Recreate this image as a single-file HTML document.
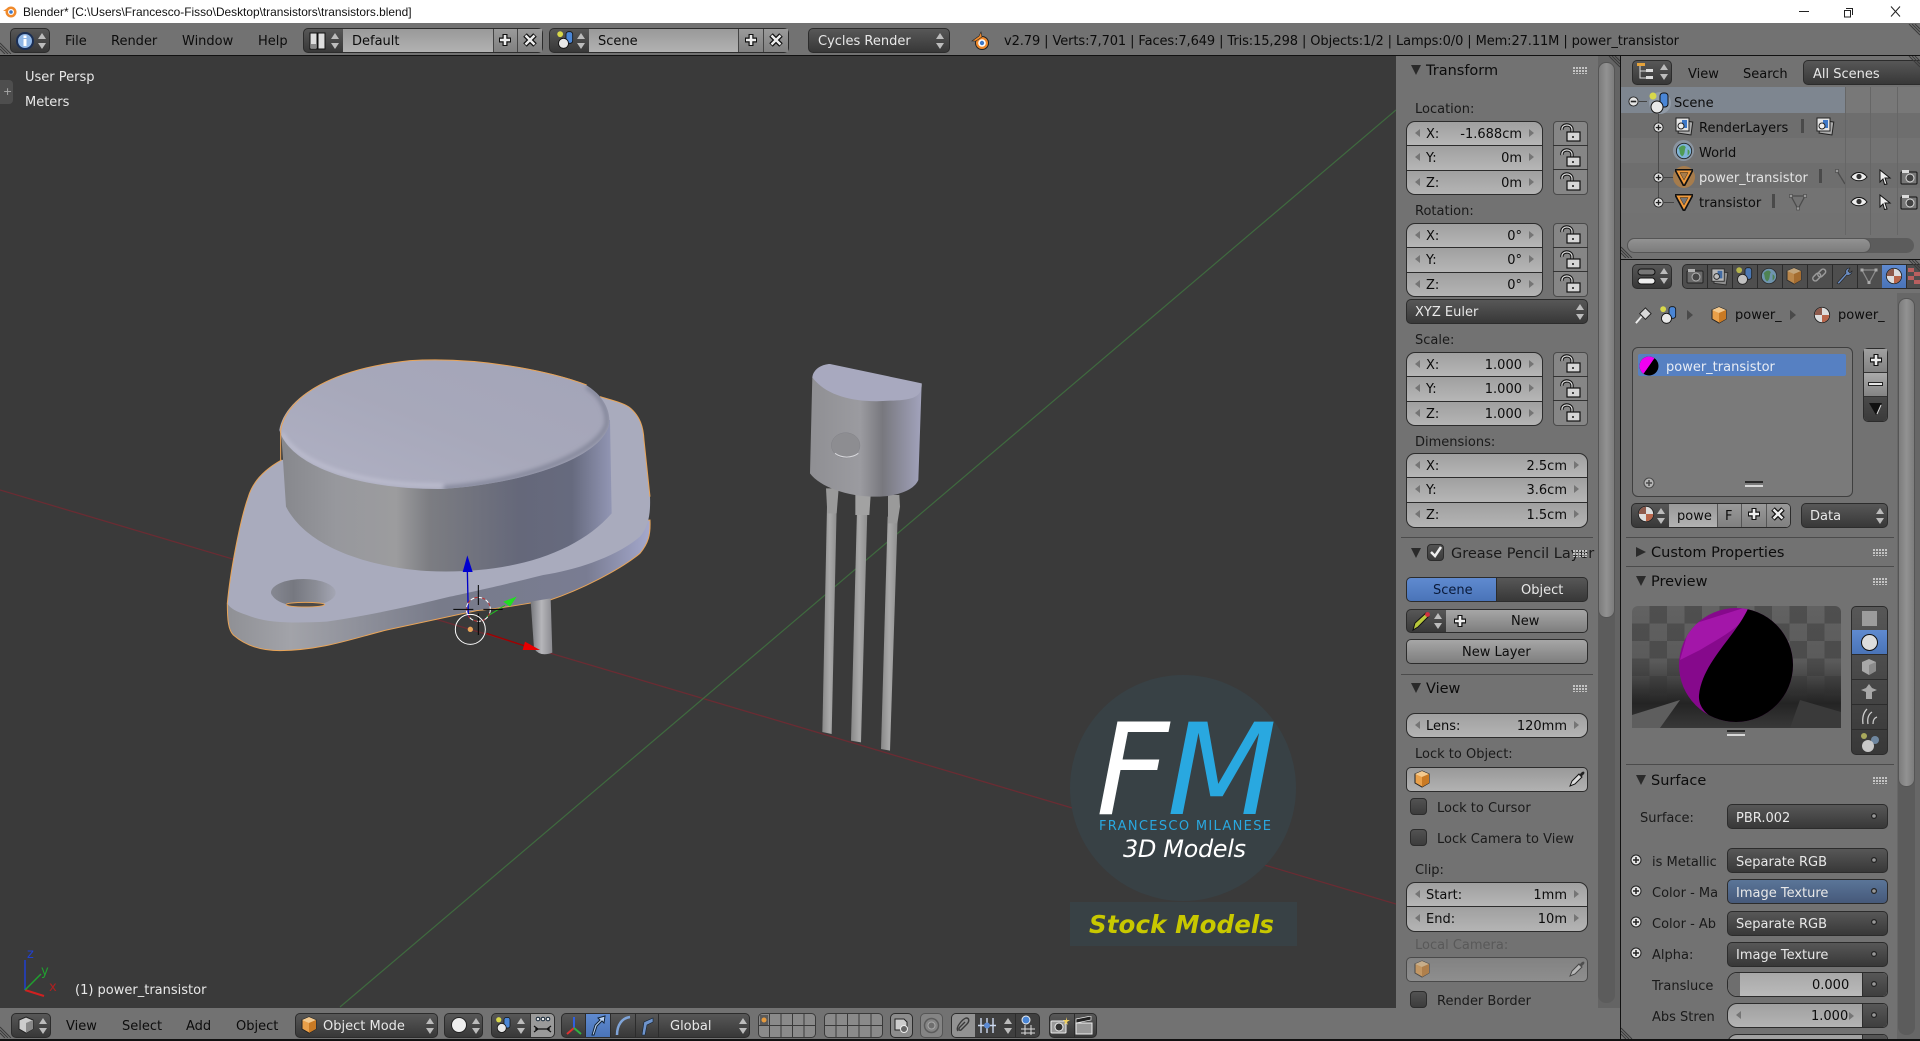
<!DOCTYPE html>
<html><head><meta charset="utf-8"><title>Blender</title>
<style>
html,body{margin:0;padding:0;width:1920px;height:1041px;overflow:hidden;background:#727272}
#r{position:absolute;left:0;top:0;width:1920px;height:1041px;overflow:hidden;font:13px/20px "DejaVu Sans","Liberation Sans",sans-serif;color:#0c0c0c}
#r div,#r span,#r svg{position:absolute;box-sizing:border-box}
.t{white-space:nowrap;line-height:20px;margin-top:1px}
.h{font-size:14.5px}
.w{color:#e8e8e8}
.bx{border:1px solid #2c2c2c;border-radius:5px}
.dk{background:linear-gradient(#575757,#383838);color:#e8e8e8}
.lt{background:linear-gradient(#a6a6a6,#7e7e7e)}
.fd{background:linear-gradient(#999,#b2b2b2)}
.g{border:1px solid #2c2c2c;border-radius:9px;overflow:hidden;background:#222}
.lk{border:1px solid #4a4a4a;border-radius:4px;background:#868686;overflow:hidden}
.n{background:linear-gradient(#a0a0a0,#b6b6b6);width:100%;left:0;border-bottom:1px solid #2c2c2c}
.al,.ar{width:0;height:0;border-top:4px solid transparent;border-bottom:4px solid transparent;top:7px}
.al{left:8px;border-right:5px solid #757575}.ar{right:8px;border-left:5px solid #757575}
.k{left:19px;top:3px;white-space:nowrap}.v{right:20px;top:3px;white-space:nowrap}
.sp{height:1px;background:#4b4b4b}
.tr{width:0;height:0;border-left:5px solid transparent;border-right:5px solid transparent;border-top:10px solid #2a2a2a}
.tc{width:0;height:0;border-top:5px solid transparent;border-bottom:5px solid transparent;border-left:10px solid #2a2a2a}
.ck{width:17px;height:17px;border:1px solid #2c2c2c;border-radius:4px;background:linear-gradient(#525252,#3c3c3c)}
.dots{width:14px;height:7px;background:repeating-linear-gradient(90deg,#c4c4c4 0 2px,transparent 2px 3px);-webkit-mask:repeating-linear-gradient(#000 0 2px,transparent 2px 3px)}
.tab{top:0;width:25px;height:100%;border-right:1px solid #2c2c2c}
.hd{background:#727272}
</style></head><body><div id="r">
<svg width="0" height="0" style="left:0;top:0"><defs>
<symbol id="ud" viewBox="0 0 10 20"><path d="M5 2L9 8H1ZM5 18L9 12H1Z" fill="#bcbcbc"/></symbol>
<symbol id="lock" viewBox="0 0 35 24"><path d="M9 9C8 3 18 2 19 8V12" fill="none" stroke="#111" stroke-width="3.4"/><path d="M9 9C8 3 18 2 19 8V12" fill="none" stroke="#ddd" stroke-width="1.2"/><rect x="14" y="11" width="13" height="9" fill="#d6d6d6" stroke="#111" stroke-width="1.2"/><rect x="19" y="15" width="2" height="2" fill="#444"/></symbol>
<symbol id="plus" viewBox="0 0 16 16"><path d="M8 2V14M2 8H14" stroke="#111" stroke-width="5"/><path d="M8 3V13M3 8H13" stroke="#eee" stroke-width="2.6"/></symbol>
<symbol id="xx" viewBox="0 0 16 16"><path d="M3 3L13 13M13 3L3 13" stroke="#111" stroke-width="5"/><path d="M3.5 3.5L12.5 12.5M12.5 3.5L3.5 12.5" stroke="#eee" stroke-width="2.4"/></symbol>
<symbol id="cube" viewBox="0 0 18 18"><path d="M9 1L16 4V13L9 17L2 13V4Z" fill="#e9a04a" stroke="#222" stroke-width="1"/><path d="M9 1L16 4L9 7L2 4Z" fill="#f3c98e"/><path d="M9 7L16 4V13L9 17Z" fill="#c97a24"/></symbol>
<symbol id="scn" viewBox="0 0 24 24"><circle cx="5" cy="5" r="3.5" fill="#d8d84a"/><rect x="12" y="2" width="8" height="14" rx="3" fill="#4a86d6" stroke="#111"/><circle cx="9" cy="16" r="6" fill="#e8e8e8" stroke="#111"/></symbol>
<symbol id="mesh" viewBox="0 0 18 18"><path d="M2 3H16L9 16Z" fill="none" stroke="#111" stroke-width="4"/><path d="M3 3.5H15L9 14.5Z" fill="none" stroke="#f09a3c" stroke-width="2"/></symbol>
<symbol id="wire" viewBox="0 0 18 18"><path d="M2 3H16L9 16Z" fill="none" stroke="#4c4c4c" stroke-width="1.300"/><rect x=".5" y="1.500" width="3" height="3" fill="#9a9a9a" stroke="#444" stroke-width=".6"/><rect x="14.500" y="1.500" width="3" height="3" fill="#9a9a9a" stroke="#444" stroke-width=".6"/><rect x="7.500" y="14" width="3" height="3" fill="#9a9a9a" stroke="#444" stroke-width=".6"/></symbol>
<symbol id="eye" viewBox="0 0 18 12"><path d="M1 6C5 0 13 0 17 6C13 11 5 11 1 6Z" fill="#eee" stroke="#111"/><circle cx="9" cy="5.5" r="2.6" fill="#333"/></symbol>
<symbol id="cur" viewBox="0 0 14 16"><path d="M2 1L12 9H7L9 15L6.500 15.500L5 10L2 13Z" fill="#eee" stroke="#111"/></symbol>
<symbol id="cam" viewBox="0 0 18 16"><rect x="1" y="3" width="16" height="12" rx="1" fill="#777" stroke="#111"/><rect x="2" y="1" width="7" height="3" fill="#ddd"/><circle cx="10" cy="9" r="4" fill="#444" stroke="#ddd"/></symbol>
<symbol id="rl" viewBox="0 0 20 20"><rect x="5" y="5" width="13" height="13" fill="#aaa" stroke="#222" transform="rotate(8 11 11)"/><rect x="2" y="2" width="13" height="13" fill="#e5e5e5" stroke="#222"/><rect x="8" y="4" width="5" height="8" fill="#3d78c8"/><circle cx="7" cy="10" r="3" fill="#eee" stroke="#222"/></symbol>
<symbol id="wd" viewBox="0 0 20 20"><circle cx="10" cy="10" r="8.500" fill="#7eb3d8" stroke="#222"/><path d="M4 7C7 3 11 3 12 6C10 9 12 13 8 16C4 13 6 10 4 7ZM14 8C17 9 17 13 14 15Z" fill="#4f9a55"/></symbol>
<symbol id="mt" viewBox="0 0 20 20"><circle cx="10" cy="10" r="8.500" fill="#ddd" stroke="#222"/><path d="M10 10L18 10A8 8 0 0 1 10 18Z" fill="#b9654a"/><path d="M2 10A8 8 0 0 1 10 2V10Z" fill="#8d5a4c"/></symbol>
<symbol id="pin" viewBox="0 0 20 20"><path d="M2 18L8 11" stroke="#eee" stroke-width="2"/><path d="M6 8L12 2L18 8L12 14Z" fill="#d8d8d8" stroke="#222"/></symbol>
<symbol id="drop" viewBox="0 0 18 18"><path d="M2 16L4 11L11 4L14 7L7 14Z" fill="#ddd" stroke="#111"/><path d="M11 5L14 2C16 1 17 2 16 4L13 7Z" fill="#222"/></symbol>
<symbol id="sk" viewBox="0 0 8 8"><circle cx="4" cy="4" r="2.400" fill="#999" stroke="#222" stroke-width="1.200"/></symbol>
<symbol id="pc" viewBox="0 0 12 12"><circle cx="6" cy="6" r="5" fill="#e5e5e5" stroke="#222"/><path d="M3 6H9M6 3V9" stroke="#222" stroke-width="1.500"/></symbol>
<symbol id="mn" viewBox="0 0 12 12"><circle cx="6" cy="6" r="5" fill="#e5e5e5" stroke="#222"/><path d="M3 6H9" stroke="#222" stroke-width="1.800"/></symbol>
<symbol id="hx" viewBox="0 0 12 12"><path d="M0 4L8 12M0 7L5 12M0 1L11 12" stroke="#3a3a3a" stroke-width="1"/></symbol>
<symbol id="hx2" viewBox="0 0 12 12"><path d="M12 8L4 0M12 5L7 0M12 11L1 0" stroke="#3a3a3a" stroke-width="1"/></symbol>
</defs></svg>

<!-- title bar -->
<div style="left:0;top:0;width:1920px;height:23px;background:#fff"></div>
<svg style="left:2px;top:3px" width="16" height="16" viewBox="0 0 16 16"><circle cx="9" cy="9" r="5.500" fill="#f08a2c"/><path d="M1 8L7 4L4 8Z" fill="#f08a2c"/><circle cx="9" cy="9" r="3" fill="#fff"/><circle cx="9" cy="9" r="1.800" fill="#3d78c8"/></svg>
<span class="t" style="left:23px;top:2px;margin:0;font:11.9px/20px 'Liberation Sans',sans-serif;color:#111">Blender* [C:\Users\Francesco-Fisso\Desktop\transistors\transistors.blend]</span>
<div style="left:1799px;top:11px;width:10px;height:1px;background:#222"></div>
<svg style="left:1843px;top:6px" width="11" height="12" viewBox="0 0 11 12"><path d="M3 2.500H9.500V9M1.500 4.500H7.500V11H1.500Z" fill="none" stroke="#222"/></svg>
<svg style="left:1889px;top:5px" width="13" height="13" viewBox="0 0 13 13"><path d="M2 1.500L11 11.500M11 1.500L2 11.500" stroke="#222"/></svg>

<!-- top header -->
<div style="left:0;top:23px;width:1920px;height:32px;background:#727272"></div>
<div style="left:0;top:55px;width:1920px;height:1px;background:#111"></div>
<svg style="left:0;top:42px" width="12" height="12"><use href="#hx"/></svg>
<svg style="left:1908px;top:24px" width="12" height="12"><use href="#hx2"/></svg>
<div class="bx dk" style="left:10px;top:28px;width:40px;height:25px"></div>
<svg style="left:15px;top:31px" width="20" height="20" viewBox="0 0 20 20"><circle cx="10" cy="10" r="8" fill="#8fb6e6" stroke="#1b2f55" stroke-width="2"/><rect x="8.500" y="8" width="3" height="7" fill="#fff"/><rect x="8.500" y="4.500" width="3" height="2.500" fill="#fff"/></svg>
<svg style="left:37px;top:31px" width="10" height="20"><use href="#ud"/></svg>
<span class="t" style="left:65px;top:31px">File</span>
<span class="t" style="left:111px;top:31px">Render</span>
<span class="t" style="left:182px;top:31px">Window</span>
<span class="t" style="left:258px;top:31px">Help</span>
<div class="bx dk" style="left:303px;top:28px;width:240px;height:25px;overflow:hidden"></div>
<svg style="left:309px;top:31px" width="18" height="20" viewBox="0 0 18 20"><rect x="1" y="2" width="7" height="16" fill="#ddd" stroke="#111"/><rect x="9" y="2" width="7" height="16" fill="#ddd" stroke="#111"/><rect x="2" y="13" width="5" height="4" fill="#888"/></svg>
<svg style="left:330px;top:31px" width="10" height="20"><use href="#ud"/></svg>
<div class="fd" style="left:343px;top:29px;width:150px;height:23px"></div>
<div style="left:493px;top:29px;width:49px;height:23px;background:linear-gradient(#9a9a9a,#808080);border-left:1px solid #444"></div>
<div style="left:517px;top:29px;width:1px;height:23px;background:#444"></div>
<span class="t" style="left:352px;top:31px">Default</span>
<svg style="left:497px;top:32px" width="16" height="16"><use href="#plus"/></svg>
<svg style="left:522px;top:32px" width="16" height="16"><use href="#xx"/></svg>
<div class="bx dk" style="left:549px;top:28px;width:240px;height:25px"></div>
<svg style="left:556px;top:30px" width="20" height="20"><use href="#scn"/></svg>
<svg style="left:576px;top:31px" width="10" height="20"><use href="#ud"/></svg>
<div class="fd" style="left:589px;top:29px;width:149px;height:23px"></div>
<div style="left:738px;top:29px;width:50px;height:23px;background:linear-gradient(#9a9a9a,#808080);border-left:1px solid #444"></div>
<div style="left:763px;top:29px;width:1px;height:23px;background:#444"></div>
<span class="t" style="left:598px;top:31px">Scene</span>
<svg style="left:743px;top:32px" width="16" height="16"><use href="#plus"/></svg>
<svg style="left:768px;top:32px" width="16" height="16"><use href="#xx"/></svg>
<div class="bx dk" style="left:808px;top:28px;width:142px;height:25px"></div>
<span class="t w" style="left:818px;top:31px">Cycles Render</span>
<svg style="left:935px;top:31px" width="10" height="20"><use href="#ud"/></svg>
<svg style="left:971px;top:31px" width="20" height="20" viewBox="0 0 20 20"><circle cx="11" cy="12" r="6.500" fill="#f08a2c" stroke="#222"/><path d="M1 10L8 5L10 1L11 6L5 10Z" fill="#f08a2c" stroke="#222" stroke-width=".6"/><circle cx="11" cy="12" r="3.800" fill="#fff"/><circle cx="11" cy="12" r="2.200" fill="#3d78c8"/></svg>
<span class="t" style="left:1004px;top:31px;letter-spacing:-.1px">v2.79 | Verts:7,701 | Faces:7,649 | Tris:15,298 | Objects:1/2 | Lamps:0/0 | Mem:27.11M | power_transistor</span>

<!-- viewport -->
<div style="left:0;top:56px;width:1396px;height:952px;background:#3a3a3a"></div>
<svg style="left:0;top:0" width="1396" height="1008" viewBox="0 0 1396 1008">
<defs>
<linearGradient id="dome" x1="0" x2="1" y1="0" y2="0"><stop offset="0" stop-color="#86878c"/><stop offset=".17" stop-color="#97989d"/><stop offset=".35" stop-color="#9c9c9e"/><stop offset=".45" stop-color="#7c7d82"/><stop offset=".72" stop-color="#65687a"/><stop offset=".88" stop-color="#666a7e"/><stop offset="1" stop-color="#9296b4"/></linearGradient>
<linearGradient id="side" x1="0" x2="1" y1="0" y2="0"><stop offset="0" stop-color="#8f9095"/><stop offset=".15" stop-color="#a2a3a9"/><stop offset=".5" stop-color="#787b8a"/><stop offset=".85" stop-color="#797c92"/><stop offset="1" stop-color="#a4a8cc"/></linearGradient>
<linearGradient id="top" x1="0" x2="1" y1="1" y2="0"><stop offset="0" stop-color="#b0b1c4"/><stop offset=".5" stop-color="#a7a8ba"/><stop offset="1" stop-color="#a3a4b8"/></linearGradient>
<linearGradient id="pg" x1="0" x2="1" y1="0" y2="0"><stop offset="0" stop-color="#76777c"/><stop offset=".5" stop-color="#b6b6ba"/><stop offset="1" stop-color="#8a8a90"/></linearGradient>
<linearGradient id="bod" x1="0" x2="1" y1="0" y2="0"><stop offset="0" stop-color="#8f8f93"/><stop offset=".45" stop-color="#9b9ba0"/><stop offset=".65" stop-color="#78787e"/><stop offset="1" stop-color="#a2a3bc"/></linearGradient>
<linearGradient id="leg" x1="0" x2="1" y1="0" y2="0"><stop offset="0" stop-color="#888"/><stop offset=".5" stop-color="#a9a9a9"/><stop offset="1" stop-color="#8e8e8e"/></linearGradient>
<linearGradient id="hol" x1="0" x2="1" y1="0" y2="0"><stop offset="0" stop-color="#868892"/><stop offset=".35" stop-color="#767880"/><stop offset=".7" stop-color="#8b8d96"/><stop offset="1" stop-color="#a4a6b4"/></linearGradient>
<clipPath id="dt"><path d="M208 270C220 190 330 90 600 62C800 50 1010 90 1120 130C1190 170 1200 220 1198 250C1180 350 950 430 700 447C450 450 240 380 208 270Z"/></clipPath>
<filter id="bl"><feGaussianBlur stdDeviation="6"/></filter>
</defs>
<path d="M0 490L1396 904" stroke="#6a2c33" stroke-width="1.300"/>
<path d="M340 1007L1396 110" stroke="#3f6a3f" stroke-width="1.200"/>

<!-- power transistor -->
<g transform="translate(210 340) scale(.33333)">
<path d="M52 790C52 840 55 870 70 885C110 920 160 932 210 932C340 930 430 895 530 870L800 812C880 805 950 790 1020 780C1110 750 1230 690 1290 640C1315 610 1322 585 1320 540L700 600Z" fill="url(#side)" stroke="#e8a458" stroke-width="3"/>
<path d="M962 785L972 925Q990 952 1027 938L1022 775Z" fill="url(#pg)"/>
<path d="M52 790C60 700 90 540 115 470C130 420 170 385 215 360L1170 170C1210 182 1245 190 1262 205C1290 230 1300 260 1302 300L1320 470C1322 520 1316 560 1290 590C1220 650 1100 690 1000 705C900 730 790 755 720 770C600 800 480 825 350 845C250 850 170 850 110 825C80 815 60 805 52 790Z" fill="#a9abbd"/>
<path d="M215 360C170 385 130 420 115 470C90 540 60 700 52 790M1170 170C1210 182 1245 190 1262 205C1290 230 1300 260 1302 300L1320 470" fill="none" stroke="#e8a458" stroke-width="3"/>
<ellipse cx="280" cy="758" rx="97" ry="41" fill="url(#hol)"/>
<ellipse cx="286" cy="794" rx="58" ry="7" fill="#4c4a48" stroke="#e8a458" stroke-width="3"/>
<path d="M183 760C190 790 215 800 230 798L226 792C205 785 190 775 183 760Z" fill="#a9abbd"/>
<path d="M210 275L215 300L228 500C290 620 470 680 650 693C900 705 1100 640 1205 520L1200 240Z" fill="url(#dome)"/>
<path d="M208 270C220 190 330 90 600 62C800 50 1010 90 1120 130C1190 170 1200 220 1198 250C1180 350 950 430 700 447C450 450 240 380 208 270Z" fill="url(#top)"/>
<g clip-path="url(#dt)">
<path d="M1130 140C1185 175 1195 225 1190 255C1160 340 950 425 700 445" fill="none" stroke="#83869a" stroke-width="14" filter="url(#bl)"/>
<path d="M215 280C260 370 450 440 700 436" fill="none" stroke="#c4c5d6" stroke-width="8" filter="url(#bl)"/>
</g>
<path d="M212 360V270C225 190 330 90 600 62C800 50 1010 90 1130 135" fill="none" stroke="#e8a458" stroke-width="3"/>
<path d="M775 830L772 690" stroke="#0000c8" stroke-width="4"/>
<path d="M772 646L758 696H788Z" fill="#0000d0"/>
<path d="M830 880L945 918" stroke="#a00000" stroke-width="4"/>
<path d="M945 905L990 930L938 930Z" fill="#e80000"/>
<path d="M830 830L885 796" stroke="#20c020" stroke-width="3"/>
<path d="M880 785L920 770L900 800Z" fill="#20e020"/>
<circle cx="805" cy="808" r="36" fill="none" stroke="#fff" stroke-width="3" stroke-dasharray="14 10"/>
<circle cx="805" cy="808" r="36" fill="none" stroke="#c03030" stroke-width="3" stroke-dasharray="10 14" stroke-dashoffset="12"/>
<path d="M730 808H790M820 808H878M805 735V795M805 820V885" stroke="#000" stroke-width="3"/>
<circle cx="781" cy="868" r="45" fill="none" stroke="#fff" stroke-width="3"/>
<circle cx="781" cy="868" r="8" fill="#e8a458"/>
</g>

<!-- small transistor -->
<g transform="translate(780 340) scale(.33333)">
<path d="M141 500L170 500L155 1182L127 1176Z" fill="url(#leg)"/>
<path d="M231 510L262 510L243 1207L213 1202Z" fill="url(#leg)"/>
<path d="M323 530L353 530L330 1232L303 1227Z" fill="url(#leg)"/>
<path d="M138 445H176L170 520H142Z" fill="#9a9a9a"/>
<path d="M226 465H272L268 525H226Z" fill="#a2a2a2"/>
<path d="M324 465H358L360 500L352 550H324Z" fill="#9a9a9a"/>
<path d="M97 110C170 185 330 190 425 130L415 420C400 455 340 470 290 470C200 470 120 440 90 400Z" fill="url(#bod)"/>
<path d="M97 112C100 85 130 72 150 72L425 130C428 175 390 180 330 182C230 190 140 170 97 112Z" fill="#a8a9bf"/>
<ellipse cx="197" cy="316" rx="43" ry="38" fill="#8d8d91" stroke="#7a7a80"/>
<path d="M165 340C185 355 215 355 235 340" fill="none" stroke="#d8d8dc" stroke-width="3"/>
</g>

<!-- axis -->
<path d="M25 990V960" stroke="#2040d0" stroke-width="1.500"/>
<path d="M25 990L44 996" stroke="#d02020" stroke-width="2"/>
<path d="M25 990L41 974" stroke="#20a030" stroke-width="1.500"/>
<text x="27" y="958" font-family="DejaVu Sans" font-size="13" fill="#2040d0">z</text>
<text x="41" y="975" font-family="DejaVu Sans" font-size="13" fill="#20a030">y</text>
<text x="49" y="991" font-family="DejaVu Sans" font-size="13" fill="#b02020">x</text>

<!-- logo -->
<circle cx="1183" cy="788" r="113" fill="#384145"/>
<rect x="1070" y="902" width="227" height="44" fill="#384145"/>
<text x="1096" y="814" font-family="DejaVu Sans" font-style="oblique" font-size="127" fill="#fff">F</text>
<text x="1167" y="814" font-family="DejaVu Sans" font-style="oblique" font-size="127" fill="#29a8e0" textLength="110" lengthAdjust="spacingAndGlyphs">M</text>
<text x="1099" y="830" font-family="DejaVu Sans" font-size="13" fill="#29a8e0" textLength="172">FRANCESCO MILANESE</text>
<text x="1123" y="857" font-family="DejaVu Sans" font-style="oblique" font-size="24" fill="#fff" textLength="123">3D Models</text>
<text x="1089" y="933" font-family="DejaVu Sans" font-style="oblique" font-weight="bold" font-size="24.500" fill="#c8c800" textLength="185">Stock Models</text>
</svg>
<div style="left:0;top:80px;width:13px;height:24px;background:#4e4e4e;border-radius:0 4px 4px 0"></div>
<span class="t" style="left:3px;top:81px;color:#aaa;font-size:11px">+</span>
<span class="t w" style="left:25px;top:67px">User Persp</span>
<span class="t w" style="left:25px;top:92px">Meters</span>
<span class="t w" style="left:75px;top:980px">(1) power_transistor</span>

<!-- N panel -->
<div style="left:1396px;top:56px;width:224px;height:952px;background:#727272"></div>
<div style="left:1598px;top:56px;width:22px;height:952px;background:#646464"></div>
<div style="left:1598px;top:62px;width:17px;height:941px;background:#5c5c5c;border-radius:8px"></div>
<div style="left:1598px;top:62px;width:17px;height:556px;background:linear-gradient(90deg,#7c7c7c,#929292 50%,#7c7c7c);border-radius:8px;border:1px solid #555"></div>
<svg style="left:1608px;top:56px" width="12" height="12"><use href="#hx2"/></svg>
<div style="left:1620px;top:56px;width:1px;height:985px;background:#111"></div>

<div class="tr" style="left:1411px;top:65px"></div>
<span class="t h" style="left:1426px;top:60px">Transform</span>
<div class="dots" style="left:1573px;top:67px"></div>
<span class="t" style="left:1415px;top:99px;color:#1a1a1a">Location:</span>
<div class="g" style="left:1406px;top:121px;width:137px;height:74px">
<div class="n" style="top:0;height:24px"><i class="al" style="position:absolute"></i><span class="k">X:</span><span class="v">-1.688cm</span><i class="ar" style="position:absolute"></i></div>
<div class="n" style="top:24px;height:25px"><i class="al" style="position:absolute"></i><span class="k">Y:</span><span class="v">0m</span><i class="ar" style="position:absolute"></i></div>
<div class="n" style="top:49px;height:25px;border:0"><i class="al" style="position:absolute"></i><span class="k">Z:</span><span class="v">0m</span><i class="ar" style="position:absolute"></i></div>
</div>
<div class="lk" style="left:1553px;top:121px;width:35px;height:74px"></div>
<svg style="left:1553px;top:121px" width="35" height="24"><use href="#lock"/></svg>
<svg style="left:1553px;top:146px" width="35" height="24"><use href="#lock"/></svg>
<svg style="left:1553px;top:170px" width="35" height="24"><use href="#lock"/></svg>
<div style="left:1553px;top:145px;width:35px;height:1px;background:#333"></div>
<div style="left:1553px;top:169px;width:35px;height:1px;background:#333"></div>

<span class="t" style="left:1415px;top:201px;color:#1a1a1a">Rotation:</span>
<div class="g" style="left:1406px;top:223px;width:137px;height:74px">
<div class="n" style="top:0;height:24px"><i class="al" style="position:absolute"></i><span class="k">X:</span><span class="v">0°</span><i class="ar" style="position:absolute"></i></div>
<div class="n" style="top:24px;height:25px"><i class="al" style="position:absolute"></i><span class="k">Y:</span><span class="v">0°</span><i class="ar" style="position:absolute"></i></div>
<div class="n" style="top:49px;height:25px;border:0"><i class="al" style="position:absolute"></i><span class="k">Z:</span><span class="v">0°</span><i class="ar" style="position:absolute"></i></div>
</div>
<div class="lk" style="left:1553px;top:223px;width:35px;height:74px"></div>
<svg style="left:1553px;top:223px" width="35" height="24"><use href="#lock"/></svg>
<svg style="left:1553px;top:248px" width="35" height="24"><use href="#lock"/></svg>
<svg style="left:1553px;top:272px" width="35" height="24"><use href="#lock"/></svg>
<div style="left:1553px;top:247px;width:35px;height:1px;background:#333"></div>
<div style="left:1553px;top:271px;width:35px;height:1px;background:#333"></div>

<div class="bx dk" style="left:1406px;top:299px;width:182px;height:25px"></div>
<span class="t w" style="left:1415px;top:302px">XYZ Euler</span>
<svg style="left:1575px;top:302px" width="10" height="20"><use href="#ud"/></svg>

<span class="t" style="left:1415px;top:330px;color:#1a1a1a">Scale:</span>
<div class="g" style="left:1406px;top:352px;width:137px;height:74px">
<div class="n" style="top:0;height:24px"><i class="al" style="position:absolute"></i><span class="k">X:</span><span class="v">1.000</span><i class="ar" style="position:absolute"></i></div>
<div class="n" style="top:24px;height:25px"><i class="al" style="position:absolute"></i><span class="k">Y:</span><span class="v">1.000</span><i class="ar" style="position:absolute"></i></div>
<div class="n" style="top:49px;height:25px;border:0"><i class="al" style="position:absolute"></i><span class="k">Z:</span><span class="v">1.000</span><i class="ar" style="position:absolute"></i></div>
</div>
<div class="lk" style="left:1553px;top:352px;width:35px;height:74px"></div>
<svg style="left:1553px;top:352px" width="35" height="24"><use href="#lock"/></svg>
<svg style="left:1553px;top:377px" width="35" height="24"><use href="#lock"/></svg>
<svg style="left:1553px;top:401px" width="35" height="24"><use href="#lock"/></svg>
<div style="left:1553px;top:376px;width:35px;height:1px;background:#333"></div>
<div style="left:1553px;top:400px;width:35px;height:1px;background:#333"></div>

<span class="t" style="left:1415px;top:432px;color:#1a1a1a">Dimensions:</span>
<div class="g" style="left:1406px;top:453px;width:182px;height:75px">
<div class="n" style="top:0;height:24px"><i class="al" style="position:absolute"></i><span class="k">X:</span><span class="v">2.5cm</span><i class="ar" style="position:absolute"></i></div>
<div class="n" style="top:24px;height:25px"><i class="al" style="position:absolute"></i><span class="k">Y:</span><span class="v">3.6cm</span><i class="ar" style="position:absolute"></i></div>
<div class="n" style="top:49px;height:26px;border:0"><i class="al" style="position:absolute"></i><span class="k">Z:</span><span class="v">1.5cm</span><i class="ar" style="position:absolute"></i></div>
</div>

<div class="sp" style="left:1401px;top:537px;width:192px"></div>
<div class="tr" style="left:1411px;top:548px"></div>
<div class="ck" style="left:1427px;top:544px"></div>
<svg style="left:1429px;top:545px" width="14" height="14" viewBox="0 0 14 14"><path d="M2 7L6 11L12 2" fill="none" stroke="#eee" stroke-width="2.500"/></svg>
<span class="t h" style="left:1451px;top:543px;color:#1a1a1a">Grease Pencil Layer</span>
<div class="dots" style="left:1573px;top:550px"></div>
<div class="bx" style="left:1406px;top:577px;width:91px;height:25px;background:linear-gradient(#5f8ad0,#4a74b8);border-radius:5px 0 0 5px;color:#0a1a3a"><span class="t" style="left:26px;top:2px">Scene</span></div>
<div class="bx dk" style="left:1496px;top:577px;width:92px;height:25px;border-radius:0 5px 5px 0"><span class="t" style="left:24px;top:2px">Object</span></div>
<div class="bx dk" style="left:1406px;top:609px;width:182px;height:24px"></div>
<div class="lt" style="left:1446px;top:610px;width:141px;height:22px;border-radius:0 4px 4px 0"></div>
<svg style="left:1411px;top:610px" width="21" height="22" viewBox="0 0 21 22"><path d="M2 20L4 13L15 3L18 6L7 17Z" fill="#b8c83c" stroke="#111"/><circle cx="16.500" cy="4.500" r="2.400" fill="#d03040"/></svg>
<svg style="left:1433px;top:611px" width="10" height="20"><use href="#ud"/></svg>
<svg style="left:1452px;top:613px" width="16" height="16"><use href="#plus"/></svg>
<span class="t" style="left:1511px;top:611px">New</span>
<div class="bx lt" style="left:1406px;top:639px;width:182px;height:25px"></div>
<span class="t" style="left:1462px;top:642px">New Layer</span>
<div class="sp" style="left:1401px;top:674px;width:192px"></div>
<div class="tr" style="left:1411px;top:683px"></div>
<span class="t h" style="left:1426px;top:678px">View</span>
<div class="dots" style="left:1573px;top:685px"></div>
<div class="g" style="left:1406px;top:713px;width:182px;height:25px">
<div class="n" style="top:0;height:25px;border:0"><i class="al" style="position:absolute"></i><span class="k">Lens:</span><span class="v">120mm</span><i class="ar" style="position:absolute"></i></div>
</div>
<span class="t" style="left:1415px;top:744px;color:#1a1a1a">Lock to Object:</span>
<div class="bx fd" style="left:1406px;top:767px;width:182px;height:25px"></div>
<svg style="left:1413px;top:770px" width="18" height="18"><use href="#cube"/></svg>
<svg style="left:1568px;top:770px" width="18" height="18"><use href="#drop"/></svg>
<div class="ck" style="left:1410px;top:798px"></div>
<span class="t" style="left:1437px;top:798px;color:#1a1a1a">Lock to Cursor</span>
<div class="ck" style="left:1410px;top:829px"></div>
<span class="t" style="left:1437px;top:829px;color:#1a1a1a">Lock Camera to View</span>
<span class="t" style="left:1415px;top:860px;color:#1a1a1a">Clip:</span>
<div class="g" style="left:1406px;top:882px;width:182px;height:50px">
<div class="n" style="top:0;height:24px"><i class="al" style="position:absolute"></i><span class="k">Start:</span><span class="v">1mm</span><i class="ar" style="position:absolute"></i></div>
<div class="n" style="top:24px;height:26px;border:0"><i class="al" style="position:absolute"></i><span class="k">End:</span><span class="v">10m</span><i class="ar" style="position:absolute"></i></div>
</div>
<span class="t" style="left:1415px;top:935px;color:#595959">Local Camera:</span>
<div class="bx" style="left:1406px;top:957px;width:182px;height:25px;background:linear-gradient(#828282,#8e8e8e);border-color:#4a4a4a"></div>
<svg style="left:1413px;top:960px;opacity:.6" width="18" height="18"><use href="#cube"/></svg>
<svg style="left:1568px;top:960px;opacity:.55" width="18" height="18"><use href="#drop"/></svg>
<div class="ck" style="left:1410px;top:991px"></div>
<span class="t" style="left:1437px;top:991px;color:#1a1a1a">Render Border</span>

<!-- bottom header -->
<div style="left:0;top:1008px;width:1620px;height:31px;background:#727272"></div>
<div style="left:0;top:1039px;width:1620px;height:2px;background:#111"></div>
<svg style="left:0;top:1026px" width="12" height="12"><use href="#hx"/></svg>
<div class="bx dk" style="left:11px;top:1013px;width:40px;height:25px"></div>
<svg style="left:17px;top:1016px" width="18" height="18" viewBox="0 0 18 18"><path d="M9 1L16 4V13L9 17L2 13V4Z" fill="#ccc" stroke="#222"/><path d="M9 7L16 4V13L9 17Z" fill="#888"/></svg>
<svg style="left:38px;top:1016px" width="10" height="20"><use href="#ud"/></svg>
<span class="t" style="left:66px;top:1016px">View</span>
<span class="t" style="left:122px;top:1016px">Select</span>
<span class="t" style="left:186px;top:1016px">Add</span>
<span class="t" style="left:236px;top:1016px">Object</span>
<div class="bx dk" style="left:295px;top:1013px;width:143px;height:25px"></div>
<svg style="left:300px;top:1016px" width="18" height="18"><use href="#cube"/></svg>
<span class="t w" style="left:323px;top:1016px">Object Mode</span>
<svg style="left:425px;top:1016px" width="10" height="20"><use href="#ud"/></svg>
<div class="bx dk" style="left:444px;top:1013px;width:39px;height:25px"></div>
<svg style="left:450px;top:1016px" width="18" height="18" viewBox="0 0 18 18"><circle cx="9" cy="9" r="7.500" fill="#eee" stroke="#222"/></svg>
<svg style="left:471px;top:1016px" width="10" height="20"><use href="#ud"/></svg>
<div class="bx dk" style="left:491px;top:1013px;width:64px;height:25px"></div>
<svg style="left:495px;top:1016px" width="18" height="18"><use href="#scn"/></svg>
<svg style="left:516px;top:1016px" width="10" height="20"><use href="#ud"/></svg>
<div style="left:530px;top:1014px;width:24px;height:23px;background:#9a9a9a;border-left:1px solid #333;border-radius:0 4px 4px 0"></div>
<svg style="left:533px;top:1016px" width="19" height="19" viewBox="0 0 19 19"><path d="M2 13H5M1 10L5 13L1 16M17 13H14M18 10L14 13L18 16M5 13H14" fill="none" stroke="#111" stroke-width="1.200"/><circle cx="5" cy="3" r="1.800" fill="#eee" stroke="#123"/><circle cx="10" cy="3" r="1.800" fill="#eee" stroke="#123"/><circle cx="15" cy="3" r="1.800" fill="#eee" stroke="#123"/></svg>
<div class="bx dk" style="left:561px;top:1013px;width:189px;height:25px"></div>
<div style="left:586px;top:1014px;width:24px;height:23px;background:linear-gradient(#5f8ad0,#4a74b8)"></div>
<div style="left:585px;top:1014px;width:1px;height:23px;background:#2c2c2c"></div>
<div style="left:610px;top:1014px;width:1px;height:23px;background:#2c2c2c"></div>
<div style="left:635px;top:1014px;width:1px;height:23px;background:#2c2c2c"></div>
<div style="left:658px;top:1014px;width:1px;height:23px;background:#2c2c2c"></div>
<svg style="left:564px;top:1015px" width="20" height="21" viewBox="0 0 20 21"><path d="M10 13V2" stroke="#3060e0" stroke-width="2"/><path d="M10 13L3 19" stroke="#e03030" stroke-width="2"/><path d="M10 13L17 19" stroke="#30b040" stroke-width="2"/></svg>
<svg style="left:589px;top:1015px" width="18" height="21" viewBox="0 0 18 21"><path d="M3 20L6 10L11 5L9 3L16 1L15 8L13 6L8 11L5 20Z" fill="#bcd4f4" stroke="#123"/></svg>
<svg style="left:614px;top:1015px" width="18" height="21" viewBox="0 0 18 21"><path d="M3 20C3 10 8 3 16 2" fill="none" stroke="#7fa4d8" stroke-width="2.500"/></svg>
<svg style="left:637px;top:1015px" width="18" height="21" viewBox="0 0 18 21"><path d="M5 20L7 7L16 3V7L10 10L8 20Z" fill="#6f94cc" stroke="#123" stroke-width=".6"/></svg>
<span class="t w" style="left:670px;top:1016px">Global</span>
<svg style="left:738px;top:1016px" width="10" height="20"><use href="#ud"/></svg>
<svg style="left:758px;top:1013px" width="58" height="25" viewBox="0 0 58 25"><rect x=".5" y=".5" width="57" height="24" rx="4" fill="#8a8a8a" stroke="#3a3a3a"/><path d="M11.500 1V24M23 1V24M34.500 1V24M46 1V24M1 12.500H57" stroke="#3a3a3a"/><rect x="2" y="2" width="8" height="10" fill="#5a5a5a"/><circle cx="6" cy="7" r="2.500" fill="#e59a3e"/></svg>
<svg style="left:824px;top:1013px" width="59" height="25" viewBox="0 0 59 25"><rect x=".5" y=".5" width="58" height="24" rx="4" fill="#8a8a8a" stroke="#3a3a3a"/><path d="M12 1V24M23.500 1V24M35 1V24M47 1V24M1 12.500H58" stroke="#3a3a3a"/></svg>
<div class="bx" style="left:890px;top:1013px;width:23px;height:25px;background:#8c8c8c"></div>
<svg style="left:893px;top:1016px" width="17" height="19" viewBox="0 0 17 19"><path d="M2 3H11L14 6V14H2Z" fill="#ccc" stroke="#222"/><circle cx="11" cy="13" r="3.500" fill="#666" stroke="#eee"/></svg>
<div class="bx" style="left:920px;top:1013px;width:23px;height:25px;background:#848484;border-color:#555"></div>
<svg style="left:923px;top:1017px" width="17" height="17" viewBox="0 0 17 17"><circle cx="8.500" cy="8.500" r="7" fill="none" stroke="#5c5c5c" stroke-width="1.500"/><circle cx="8.500" cy="8.500" r="3.500" fill="#6e6e6e" stroke="#a8a8a8"/></svg>
<div class="bx" style="left:951px;top:1013px;width:89px;height:25px;background:#3f3f3f"></div>
<div style="left:952px;top:1014px;width:23px;height:23px;background:#929292;border-radius:4px 0 0 4px"></div>
<svg style="left:954px;top:1016px" width="18" height="19" viewBox="0 0 18 19"><path d="M4 15C1 11 9 3 12 2C16 2 15 6 13 8L7 14C5 15 4 13 6 11L11 6" fill="none" stroke="#3a3a3a" stroke-width="1.400"/></svg>
<div style="left:1015px;top:1014px;width:1px;height:23px;background:#2c2c2c"></div>
<svg style="left:977px;top:1016px" width="24" height="19" viewBox="0 0 24 19"><path d="M4 2V17M10 2V17M16 2V17M1 9.500H19" stroke="#ccd9f0" stroke-width="1.400"/><circle cx="10" cy="9.500" r="3" fill="#5b8ad4"/></svg>
<svg style="left:1003px;top:1016px" width="10" height="20"><use href="#ud"/></svg>
<svg style="left:1018px;top:1015px" width="20" height="21" viewBox="0 0 20 21"><path d="M3 14H17M3 18H17M7 10V20M13 10V20" stroke="#ddd"/><circle cx="8" cy="5" r="4" fill="#4a86d6" stroke="#eee"/></svg>
<div class="bx dk" style="left:1049px;top:1013px;width:48px;height:25px"></div>
<div style="left:1074px;top:1014px;width:1px;height:23px;background:#2c2c2c"></div>
<svg style="left:1050px;top:1016px" width="20" height="19" viewBox="0 0 20 19"><rect x="1" y="5" width="15" height="12" rx="1" fill="#999" stroke="#eee"/><circle cx="9" cy="11" r="4" fill="#333" stroke="#eee"/><path d="M16 1L17 4L20 4L17 6L18 9L16 7L14 9L15 6L13 4L16 4Z" fill="#f0d060"/></svg>
<svg style="left:1075px;top:1016px" width="18" height="19" viewBox="0 0 18 19"><rect x="1" y="7" width="16" height="11" fill="#999" stroke="#eee"/><path d="M1 3L16 0V4L1 7Z" fill="#222" stroke="#eee" stroke-width=".7"/></svg>

<!-- outliner -->
<div style="left:1621px;top:56px;width:299px;height:203px;background:#727272"></div>
<div class="bx dk" style="left:1632px;top:60px;width:40px;height:25px"></div>
<svg style="left:1636px;top:62px" width="20" height="20" viewBox="0 0 20 20"><rect x="1" y="1" width="8" height="3" fill="#e5a23a"/><path d="M4 4V16H10M4 9H10" stroke="#ddd" fill="none"/><rect x="10" y="7" width="7" height="3" fill="#ddd"/><rect x="10" y="14" width="7" height="3" fill="#ddd"/></svg>
<svg style="left:1659px;top:62px" width="10" height="20"><use href="#ud"/></svg>
<span class="t" style="left:1688px;top:64px">View</span>
<span class="t" style="left:1743px;top:64px">Search</span>
<div class="bx dk" style="left:1803px;top:60px;width:130px;height:25px"></div>
<span class="t w" style="left:1813px;top:64px">All Scenes</span>
<svg style="left:1908px;top:56px" width="12" height="12"><use href="#hx2"/></svg>
<div style="left:1621px;top:87px;width:299px;height:26px;background:#787878"></div>
<div style="left:1621px;top:87px;width:224px;height:26px;background:#7e8690"></div>
<div style="left:1621px;top:113px;width:299px;height:25px;background:#6e6e6e"></div>
<div style="left:1621px;top:138px;width:299px;height:25px;background:#737373"></div>
<div style="left:1621px;top:163px;width:299px;height:25px;background:#6e6e6e"></div>
<div style="left:1621px;top:188px;width:299px;height:25px;background:#737373"></div>
<div style="left:1845px;top:87px;width:1px;height:148px;background:#666"></div>
<div style="left:1870px;top:87px;width:1px;height:148px;background:#666"></div>
<div style="left:1897px;top:87px;width:1px;height:148px;background:#666"></div>
<div style="left:1658px;top:110px;width:1px;height:90px;background:#4a4a4a"></div>
<svg style="left:1628px;top:96px" width="11" height="11"><use href="#mn"/></svg>
<div style="left:1639px;top:101px;width:8px;height:1px;background:#444"></div>
<div style="left:1649px;top:92px;width:22px;height:22px;border-radius:50%;background:#929ca8"></div>
<svg style="left:1648px;top:91px" width="24" height="24"><use href="#scn"/></svg>
<span class="t" style="left:1674px;top:93px">Scene</span>
<svg style="left:1653px;top:122px" width="11" height="11"><use href="#pc"/></svg>
<svg style="left:1674px;top:116px" width="20" height="20"><use href="#rl"/></svg>
<span class="t" style="left:1699px;top:118px">RenderLayers</span>
<div style="left:1801px;top:119px;width:3px;height:14px;background:#4a4a4a"></div>
<svg style="left:1815px;top:116px" width="20" height="20"><use href="#rl"/></svg>
<div style="left:1673px;top:140px;width:21px;height:21px;border-radius:50%;background:#8a94a0"></div>
<svg style="left:1675px;top:142px" width="18" height="18"><use href="#wd"/></svg>
<span class="t" style="left:1699px;top:143px">World</span>
<svg style="left:1653px;top:172px" width="11" height="11"><use href="#pc"/></svg>
<div style="left:1664px;top:177px;width:10px;height:1px;background:#444"></div>
<div style="left:1673px;top:166px;width:22px;height:22px;border-radius:50%;background:#a67c4c"></div>
<svg style="left:1675px;top:168px" width="18" height="18"><use href="#mesh"/></svg>
<span class="t" style="left:1699px;top:168px;color:#e4e4e4">power_transistor</span>
<div style="left:1819px;top:169px;width:3px;height:14px;background:#4a4a4a"></div>
<svg style="left:1835px;top:168px" width="10" height="18" viewBox="0 0 10 18"><path d="M2 3L10 16" stroke="#4c4c4c" stroke-width="1.300"/><rect x=".5" y="1.500" width="3" height="3" fill="#9a9a9a" stroke="#444" stroke-width=".6"/></svg>
<svg style="left:1850px;top:171px" width="18" height="12"><use href="#eye"/></svg>
<svg style="left:1878px;top:169px" width="14" height="16"><use href="#cur"/></svg>
<svg style="left:1900px;top:169px" width="18" height="16"><use href="#cam"/></svg>
<svg style="left:1653px;top:197px" width="11" height="11"><use href="#pc"/></svg>
<div style="left:1664px;top:202px;width:10px;height:1px;background:#444"></div>
<svg style="left:1675px;top:193px" width="18" height="18"><use href="#mesh"/></svg>
<span class="t" style="left:1699px;top:193px">transistor</span>
<div style="left:1772px;top:194px;width:3px;height:14px;background:#4a4a4a"></div>
<svg style="left:1789px;top:193px" width="18" height="18"><use href="#wire"/></svg>
<svg style="left:1850px;top:196px" width="18" height="12"><use href="#eye"/></svg>
<svg style="left:1878px;top:194px" width="14" height="16"><use href="#cur"/></svg>
<svg style="left:1900px;top:194px" width="18" height="16"><use href="#cam"/></svg>
<div style="left:1627px;top:238px;width:287px;height:15px;background:#5c5c5c;border-radius:8px"></div>
<div style="left:1627px;top:238px;width:244px;height:15px;background:linear-gradient(#929292,#7c7c7c);border-radius:8px;border:1px solid #555"></div>
<svg style="left:1621px;top:246px" width="12" height="12"><use href="#hx"/></svg>
<div style="left:1621px;top:259px;width:299px;height:1px;background:#111"></div>

<!-- properties -->
<div style="left:1621px;top:260px;width:299px;height:781px;background:#727272"></div>
<div style="left:1897px;top:293px;width:23px;height:748px;background:#676767"></div>
<div style="left:1898px;top:298px;width:17px;height:737px;background:#5c5c5c;border-radius:8px"></div>
<div style="left:1898px;top:298px;width:17px;height:489px;background:linear-gradient(90deg,#7c7c7c,#929292 50%,#7c7c7c);border-radius:8px;border:1px solid #555"></div>
<div class="bx dk" style="left:1632px;top:264px;width:40px;height:25px"></div>
<svg style="left:1637px;top:266px" width="20" height="20" viewBox="0 0 20 20"><rect x="1" y="3" width="17" height="6" rx="3" fill="#777" stroke="#111"/><rect x="1" y="12" width="17" height="6" rx="3" fill="#eee" stroke="#111"/></svg>
<svg style="left:1659px;top:266px" width="10" height="20"><use href="#ud"/></svg>
<div class="bx" style="left:1682px;top:264px;width:250px;height:25px;background:#4e4e4e;overflow:hidden">
<div class="tab" style="left:0"></div><div class="tab" style="left:25px"></div><div class="tab" style="left:50px"></div><div class="tab" style="left:75px"></div><div class="tab" style="left:100px"></div><div class="tab" style="left:125px"></div><div class="tab" style="left:150px"></div><div class="tab" style="left:175px"></div>
<div class="tab" style="left:199px;background:linear-gradient(#5f8ad0,#4a74b8)"></div>
</div>
<svg style="left:1686px;top:268px;opacity:.7" width="18" height="16"><use href="#cam"/></svg>
<svg style="left:1710px;top:267px;opacity:.7" width="19" height="19"><use href="#rl"/></svg>
<svg style="left:1735px;top:266px;opacity:.75" width="20" height="20"><use href="#scn"/></svg>
<svg style="left:1760px;top:267px;opacity:.7" width="18" height="18"><use href="#wd"/></svg>
<svg style="left:1785px;top:267px;opacity:.7" width="18" height="18"><use href="#cube"/></svg>
<svg style="left:1810px;top:267px" width="18" height="18" viewBox="0 0 18 18"><rect x="2" y="8" width="9" height="5" rx="2.500" fill="none" stroke="#9a9a9a" stroke-width="1.500" transform="rotate(-45 6 10)"/><rect x="7" y="4" width="9" height="5" rx="2.500" fill="none" stroke="#9a9a9a" stroke-width="1.500" transform="rotate(-45 11 6)"/></svg>
<svg style="left:1835px;top:267px" width="18" height="18" viewBox="0 0 18 18"><path d="M2 16L11 6C10 3 12 1 15 1L13 4L15 6L17 4C17 7 14 9 12 8L4 17Z" fill="#6c8ec4" stroke="#222" stroke-width=".6"/></svg>
<svg style="left:1860px;top:267px" width="18" height="18" viewBox="0 0 18 18"><path d="M2 3H16L9 16Z" fill="none" stroke="#8a8a8a" stroke-width="1.300"/><rect x=".5" y="1.500" width="3" height="3" fill="#aaa"/><rect x="14.500" y="1.500" width="3" height="3" fill="#aaa"/><rect x="7.500" y="14" width="3" height="3" fill="#aaa"/></svg>
<svg style="left:1885px;top:267px" width="18" height="18"><use href="#mt"/></svg>
<svg style="left:1908px;top:268px" width="12" height="16" viewBox="0 0 12 16"><path d="M0 0H6V4H0ZM6 4H12V8H6ZM0 8H6V12H0ZM6 12H12V16H6Z" fill="#b85f5f"/></svg>
<svg style="left:1908px;top:260px" width="12" height="12"><use href="#hx2"/></svg>

<svg style="left:1634px;top:306px" width="19" height="19"><use href="#pin"/></svg>
<svg style="left:1659px;top:305px" width="20" height="20"><use href="#scn"/></svg>
<div class="tc" style="left:1687px;top:310px;border-left:6px solid #4a4a4a"></div>
<svg style="left:1710px;top:306px" width="18" height="18"><use href="#cube"/></svg>
<span class="t" style="left:1735px;top:305px">power_</span>
<div class="tc" style="left:1790px;top:310px;border-left:6px solid #4a4a4a"></div>
<svg style="left:1813px;top:306px" width="18" height="18"><use href="#mt"/></svg>
<span class="t" style="left:1838px;top:305px">power_</span>

<div style="left:1632px;top:347px;width:221px;height:150px;background:#7a7a7a;border:1px solid #3f3f3f;border-radius:6px"></div>
<div style="left:1638px;top:354px;width:208px;height:22px;background:#5680c2;border-radius:2px"></div>
<svg style="left:1639px;top:356px" width="20" height="20" viewBox="0 0 20 20"><defs><clipPath id="c1"><circle cx="10" cy="10" r="9.500"/></clipPath></defs><circle cx="10" cy="10" r="9.500" fill="#000"/><path d="M0 0H17L3 20H0Z" fill="#f000f0" clip-path="url(#c1)"/></svg>
<span class="t" style="left:1666px;top:357px;color:#e8ecf4">power_transistor</span>
<div class="bx" style="left:1863px;top:348px;width:25px;height:74px;background:#8a8a8a;overflow:hidden"></div>
<div style="left:1864px;top:349px;width:23px;height:23px;background:linear-gradient(#a0a0a0,#828282)"></div>
<div style="left:1864px;top:372px;width:23px;height:24px;background:linear-gradient(#aaa,#848484);border-top:1px solid #333"></div>
<div style="left:1864px;top:396px;width:23px;height:25px;background:linear-gradient(#4a4a4a,#3a3a3a);border-top:1px solid #333;border-radius:0 0 4px 4px"></div>
<svg style="left:1868px;top:352px" width="16" height="16"><use href="#plus"/></svg>
<div style="left:1868px;top:382px;width:15px;height:4px;background:#e6e6e6;border:1px solid #222"></div>
<svg style="left:1868px;top:402px" width="15" height="14" viewBox="0 0 15 14"><path d="M1 1H14L8 13Z" fill="#111"/><path d="M13 3L9 12" stroke="#ddd"/></svg>
<svg style="left:1643px;top:477px;opacity:.55" width="12" height="12"><use href="#pc"/></svg>
<div style="left:1745px;top:481px;width:18px;height:1.500px;background:#2a2a2a"></div>
<div style="left:1745px;top:485px;width:18px;height:2px;background:#d8d8d8"></div>

<div class="bx dk" style="left:1631px;top:503px;width:160px;height:25px"></div>
<div class="fd" style="left:1669px;top:504px;width:121px;height:23px;border-radius:0 4px 4px 0"></div>
<div style="left:1717px;top:504px;width:73px;height:23px;background:linear-gradient(#9a9a9a,#808080);border-left:1px solid #555;border-radius:0 4px 4px 0"></div>
<div style="left:1741px;top:504px;width:1px;height:23px;background:#555"></div>
<div style="left:1766px;top:504px;width:1px;height:23px;background:#555"></div>
<svg style="left:1637px;top:505px" width="18" height="18"><use href="#mt"/></svg>
<svg style="left:1656px;top:506px" width="10" height="20"><use href="#ud"/></svg>
<span class="t" style="left:1677px;top:506px">powe</span>
<span class="t" style="left:1725px;top:506px">F</span>
<svg style="left:1746px;top:506px" width="16" height="16"><use href="#plus"/></svg>
<svg style="left:1770px;top:506px" width="16" height="16"><use href="#xx"/></svg>
<div class="bx dk" style="left:1801px;top:503px;width:87px;height:25px"></div>
<span class="t w" style="left:1810px;top:506px">Data</span>
<svg style="left:1875px;top:506px" width="10" height="20"><use href="#ud"/></svg>

<div class="sp" style="left:1626px;top:537px;width:268px"></div>
<div class="tc" style="left:1636px;top:547px"></div>
<span class="t h" style="left:1651px;top:542px">Custom Properties</span>
<div class="dots" style="left:1873px;top:549px"></div>
<div class="sp" style="left:1626px;top:566px;width:268px"></div>
<div class="tr" style="left:1636px;top:576px"></div>
<span class="t h" style="left:1651px;top:571px">Preview</span>
<div class="dots" style="left:1873px;top:578px"></div>

<div style="left:1632px;top:606px;width:209px;height:122px;border-radius:6px;overflow:hidden;background:conic-gradient(#4f4f4f 25%,#626262 0 50%,#4f4f4f 0 75%,#626262 0) 0 0/35px 35px"></div>
<svg style="left:1632px;top:606px" width="209" height="122" viewBox="1632 606 209 122">
<defs><clipPath id="sph"><circle cx="1736" cy="665" r="57"/></clipPath><linearGradient id="fl" x1="0" x2="0" y1="0" y2="1"><stop offset="0" stop-color="#3c3c3c" stop-opacity="0"/><stop offset=".45" stop-color="#3c3c3c" stop-opacity=".2"/><stop offset=".68" stop-color="#303030" stop-opacity=".9"/><stop offset=".8" stop-color="#242424"/><stop offset="1" stop-color="#383838"/></linearGradient></defs>
<rect x="1632" y="606" width="209" height="122" rx="6" fill="url(#fl)"/>
<path d="M1632 715L1680 700L1660 728H1632Z" fill="#5e5e5e"/>
<path d="M1800 700L1841 712V728H1790Z" fill="#3a3a3a"/>
<circle cx="1736" cy="665" r="57" fill="#86098c"/>
<path d="M1690 625L1750 606L1752 606C1745 625 1725 635 1700 650L1680 660Z" fill="#a316a9" clip-path="url(#sph)"/>
<path d="M1750 604C1738 635 1703 660 1699 695C1698 708 1708 716 1722 724L1800 724L1800 604Z" fill="#000" clip-path="url(#sph)"/>
</svg>
<div class="bx dk" style="left:1851px;top:606px;width:37px;height:149px;overflow:hidden"></div>
<div style="left:1852px;top:630px;width:35px;height:24px;background:linear-gradient(#5f8ad0,#4a74b8)"></div>
<div style="left:1852px;top:654px;width:35px;height:1px;background:#2c2c2c"></div>
<div style="left:1852px;top:679px;width:35px;height:1px;background:#2c2c2c"></div>
<div style="left:1852px;top:704px;width:35px;height:1px;background:#2c2c2c"></div>
<div style="left:1852px;top:729px;width:35px;height:1px;background:#2c2c2c"></div>
<div style="left:1862px;top:611px;width:15px;height:15px;background:#9c9c9c"></div>
<svg style="left:1860px;top:633px" width="19" height="19" viewBox="0 0 19 19"><circle cx="9.500" cy="9.500" r="8" fill="#ddd" stroke="#111"/></svg>
<svg style="left:1860px;top:658px" width="18" height="18" viewBox="0 0 18 18"><path d="M9 1L16 4V13L9 17L2 13V4Z" fill="#a8a8a8"/><path d="M9 7L16 4V13L9 17Z" fill="#8a8a8a"/></svg>
<svg style="left:1860px;top:682px" width="19" height="19" viewBox="0 0 19 19"><path d="M9 2L12 6L17 8L12 10V17H6V10L1 8L6 6Z" fill="#a8a8a8"/></svg>
<svg style="left:1860px;top:707px" width="19" height="19" viewBox="0 0 19 19"><path d="M3 17C2 10 4 5 7 2M8 17C7 11 9 7 12 5M13 17C13 13 14 11 17 10" fill="none" stroke="#ccc" stroke-width="1.300"/></svg>
<svg style="left:1859px;top:732px" width="22" height="21" viewBox="0 0 22 21"><circle cx="5" cy="4" r="3" fill="#a8a85c"/><circle cx="16" cy="8" r="4" fill="#6f87a0"/><circle cx="9" cy="14" r="6" fill="#c8c8c8"/></svg>
<div style="left:1727px;top:730px;width:18px;height:1.500px;background:#2a2a2a"></div>
<div style="left:1727px;top:734px;width:18px;height:2px;background:#d8d8d8"></div>

<div class="sp" style="left:1626px;top:764px;width:268px"></div>
<div class="tr" style="left:1636px;top:775px"></div>
<span class="t h" style="left:1651px;top:770px">Surface</span>
<div class="dots" style="left:1873px;top:777px"></div>

<span class="t" style="left:1640px;top:808px;color:#1a1a1a">Surface:</span>
<div class="bx dk" style="left:1727px;top:804px;width:161px;height:25px"></div>
<span class="t w" style="left:1736px;top:808px">PBR.002</span>
<svg style="left:1870px;top:812px" width="8" height="8"><use href="#sk"/></svg>

<svg style="left:1630px;top:854px" width="12" height="12"><use href="#pc"/></svg>
<span class="t" style="left:1652px;top:852px;color:#1a1a1a">is Metallic</span>
<div class="bx dk" style="left:1727px;top:848px;width:161px;height:25px"></div>
<span class="t w" style="left:1736px;top:852px">Separate RGB</span>
<svg style="left:1870px;top:856px" width="8" height="8"><use href="#sk"/></svg>

<svg style="left:1630px;top:885px" width="12" height="12"><use href="#pc"/></svg>
<span class="t" style="left:1652px;top:883px;color:#1a1a1a">Color - Ma</span>
<div class="bx" style="left:1727px;top:879px;width:161px;height:25px;background:linear-gradient(#5a7598,#46597a);color:#e8e8e8"></div>
<span class="t w" style="left:1736px;top:883px">Image Texture</span>
<svg style="left:1870px;top:887px" width="8" height="8"><use href="#sk"/></svg>

<svg style="left:1630px;top:916px" width="12" height="12"><use href="#pc"/></svg>
<span class="t" style="left:1652px;top:914px;color:#1a1a1a">Color - Ab</span>
<div class="bx dk" style="left:1727px;top:911px;width:161px;height:25px"></div>
<span class="t w" style="left:1736px;top:914px">Separate RGB</span>
<svg style="left:1870px;top:918px" width="8" height="8"><use href="#sk"/></svg>

<svg style="left:1630px;top:947px" width="12" height="12"><use href="#pc"/></svg>
<span class="t" style="left:1652px;top:945px;color:#1a1a1a">Alpha:</span>
<div class="bx dk" style="left:1727px;top:942px;width:161px;height:25px"></div>
<span class="t w" style="left:1736px;top:945px">Image Texture</span>
<svg style="left:1870px;top:950px" width="8" height="8"><use href="#sk"/></svg>

<span class="t" style="left:1652px;top:976px;color:#1a1a1a">Transluce</span>
<div class="g" style="left:1727px;top:972px;width:161px;height:25px;border-radius:10px 5px 5px 10px">
<div class="n" style="top:0;height:25px;border:0;background:linear-gradient(#a8a8a8,#bcbcbc)"></div>
<div style="left:0;top:0;width:12px;height:25px;background:#6e6e6e"></div>
<div style="left:134px;top:0;width:26px;height:25px;background:linear-gradient(#575757,#3c3c3c);border-left:1px solid #2c2c2c"></div>
<span class="t" style="left:84px;top:2px">0.000</span>
</div>
<svg style="left:1870px;top:980px" width="8" height="8"><use href="#sk"/></svg>

<span class="t" style="left:1652px;top:1007px;color:#1a1a1a">Abs Stren</span>
<div class="g" style="left:1727px;top:1003px;width:161px;height:25px;border-radius:10px 5px 5px 10px">
<div class="n" style="top:0;height:25px;border:0"><i class="al" style="position:absolute"></i></div>
<div class="ar" style="left:121px;top:8px"></div>
<div style="left:134px;top:0;width:26px;height:25px;background:linear-gradient(#575757,#3c3c3c);border-left:1px solid #2c2c2c"></div>
<span class="t" style="left:83px;top:2px">1.000</span>
</div>
<svg style="left:1870px;top:1011px" width="8" height="8"><use href="#sk"/></svg>

<div class="g" style="left:1727px;top:1034px;width:161px;height:25px;border-radius:10px 5px 5px 10px">
<div class="n" style="top:0;height:25px;border:0"></div>
<div style="left:134px;top:0;width:26px;height:25px;background:linear-gradient(#575757,#3c3c3c);border-left:1px solid #2c2c2c"></div>
</div>
<div style="left:1621px;top:1039px;width:299px;height:2px;background:#111"></div>
<svg style="left:1621px;top:1027px" width="12" height="12"><use href="#hx"/></svg>
</div></body></html>
